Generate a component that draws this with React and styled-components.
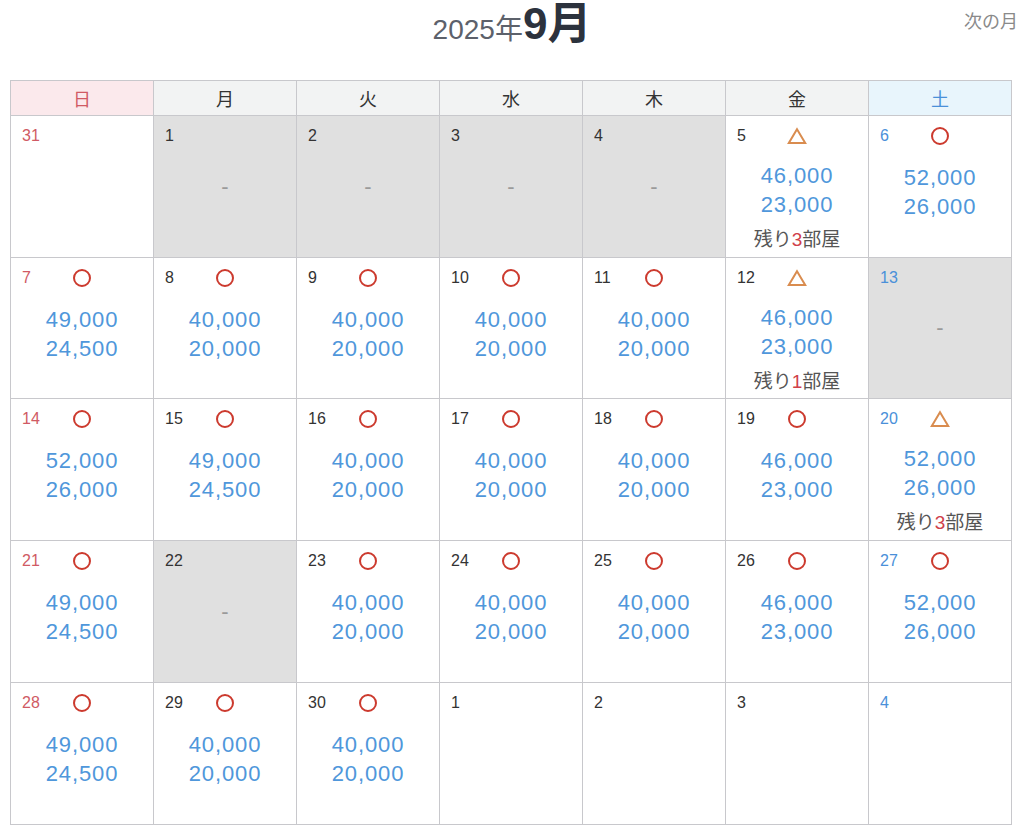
import React from "react";
import styled, { createGlobalStyle } from "styled-components";

const GlobalStyle = createGlobalStyle`
  body {
    margin: 0;
    background: #fff;
    font-family: "Liberation Sans", "Noto Sans CJK JP", sans-serif;
    color: #333;
  }
`;

const Page = styled.div`
  width: 1024px;
  padding: 0 10px;
  box-sizing: border-box;
`;

const Top = styled.div`
  display: grid;
  grid-template-columns: 1fr auto 1fr;
  align-items: start;
  height: 80px;
  margin-right: -4px;
`;

const Title = styled.h1`
  grid-column: 2;
  margin: 0 4px 0 0;
  font-weight: normal;
  line-height: 48px;
  white-space: nowrap;
`;

const Year = styled.span`
  font-size: 28px;
  color: #5c616b;
`;

const Month = styled.span`
  font-size: 44px;
  font-weight: bold;
  color: #2c323d;
`;

const NextLink = styled.a`
  justify-self: end;
  margin-top: 10px;
  font-size: 18px;
  line-height: 24px;
  color: #8a8a8a;
  cursor: pointer;
`;

const Grid = styled.div`
  display: grid;
  grid-template-columns: repeat(7, 142px);
  grid-template-rows: 34px 141px 140px 141px 141px 141px;
  gap: 1px;
  padding: 1px;
  background: #c8c8cc;
  width: max-content;
`;

const headBg = { sun: "#fbe9ec", sat: "#e8f5fc", day: "#f2f3f3" };
const dayColor = { sun: "#d05a64", sat: "#4a90d9", day: "#333" };

const HeadCell = styled.div`
  display: flex;
  align-items: center;
  justify-content: center;
  font-size: 18px;
  background: ${(p) => headBg[p.$kind]};
  color: ${(p) => (p.$kind === "day" ? "#333" : dayColor[p.$kind])};
`;

const Cell = styled.div`
  display: flex;
  flex-direction: column;
  background: ${(p) => (p.$closed ? "#e0e0e0" : "#fff")};
  padding: 10px 0 0;
`;

const CellHead = styled.div`
  display: grid;
  grid-template-columns: 1fr auto 1fr;
  align-items: center;
  height: 20px;
`;

const DateNum = styled.span`
  padding-left: 11px;
  font-size: 16px;
  line-height: 20px;
  color: ${(p) => dayColor[p.$kind]};
`;

const Mark = styled.svg`
  display: block;
  width: 22px;
  height: 20px;
`;

const Prices = styled.div`
  margin-top: ${(p) => (p.$withNote ? "15px" : "17px")};
  text-align: center;
  font-size: 22px;
  line-height: 29px;
  letter-spacing: 0.9px;
  color: #4f97db;
`;

const Note = styled.div`
  margin-top: 9px;
  text-align: center;
  font-size: 19px;
  line-height: 24px;
  color: #555;
`;

const NoteNum = styled.span`
  color: #d0404a;
`;

const Closed = styled.div`
  flex: 1;
  display: flex;
  align-items: center;
  justify-content: center;
  padding-bottom: 30px;
  font-size: 22px;
  color: #9a9a9a;
`;

function Circle() {
  return (
    <Mark viewBox="0 0 22 20">
      <circle cx="11" cy="10" r="8" fill="none" stroke="#cc3a2e" strokeWidth="2" />
    </Mark>
  );
}

function Triangle() {
  return (
    <Mark viewBox="0 0 22 20">
      <path d="M11 3.2 L19.2 17 L2.8 17 Z" fill="none" stroke="#d98c4f" strokeWidth="2" strokeLinejoin="miter" />
    </Mark>
  );
}

const fmt = (n) => n.toLocaleString("en-US");

const P = {
  a: [40000, 20000],
  b: [46000, 23000],
  c: [49000, 24500],
  d: [52000, 26000],
};

const weeks = [
  [
    { d: 31 },
    { d: 1, closed: true },
    { d: 2, closed: true },
    { d: 3, closed: true },
    { d: 4, closed: true },
    { d: 5, m: "tri", p: P.b, left: 3 },
    { d: 6, m: "o", p: P.d },
  ],
  [
    { d: 7, m: "o", p: P.c },
    { d: 8, m: "o", p: P.a },
    { d: 9, m: "o", p: P.a },
    { d: 10, m: "o", p: P.a },
    { d: 11, m: "o", p: P.a },
    { d: 12, m: "tri", p: P.b, left: 1 },
    { d: 13, closed: true },
  ],
  [
    { d: 14, m: "o", p: P.d },
    { d: 15, m: "o", p: P.c },
    { d: 16, m: "o", p: P.a },
    { d: 17, m: "o", p: P.a },
    { d: 18, m: "o", p: P.a },
    { d: 19, m: "o", p: P.b },
    { d: 20, m: "tri", p: P.d, left: 3 },
  ],
  [
    { d: 21, m: "o", p: P.c },
    { d: 22, closed: true },
    { d: 23, m: "o", p: P.a },
    { d: 24, m: "o", p: P.a },
    { d: 25, m: "o", p: P.a },
    { d: 26, m: "o", p: P.b },
    { d: 27, m: "o", p: P.d },
  ],
  [
    { d: 28, m: "o", p: P.c },
    { d: 29, m: "o", p: P.a },
    { d: 30, m: "o", p: P.a },
    { d: 1 },
    { d: 2 },
    { d: 3 },
    { d: 4 },
  ],
];

const heads = ["日", "月", "火", "水", "木", "金", "土"];
const kindOf = (i) => (i === 0 ? "sun" : i === 6 ? "sat" : "day");

export default function App() {
  return (
    <Page>
      <GlobalStyle />
      <Top>
        <Title>
          <Year>2025年</Year>
          <Month>9月</Month>
        </Title>
        <NextLink>次の月</NextLink>
      </Top>
      <Grid>
        {heads.map((h, i) => (
          <HeadCell key={h} $kind={kindOf(i)}>
            {h}
          </HeadCell>
        ))}
        {weeks.map((week, w) =>
          week.map((c, i) => (
            <Cell key={`${w}-${i}`} $closed={c.closed}>
              <CellHead>
                <DateNum $kind={kindOf(i)}>{c.d}</DateNum>
                {c.m === "o" && <Circle />}
                {c.m === "tri" && <Triangle />}
              </CellHead>
              {c.closed && <Closed>-</Closed>}
              {c.p && (
                <Prices $withNote={!!c.left}>
                  <div>{fmt(c.p[0])}</div>
                  <div>{fmt(c.p[1])}</div>
                </Prices>
              )}
              {c.left && (
                <Note>
                  残り<NoteNum>{c.left}</NoteNum>部屋
                </Note>
              )}
            </Cell>
          ))
        )}
      </Grid>
    </Page>
  );
}
